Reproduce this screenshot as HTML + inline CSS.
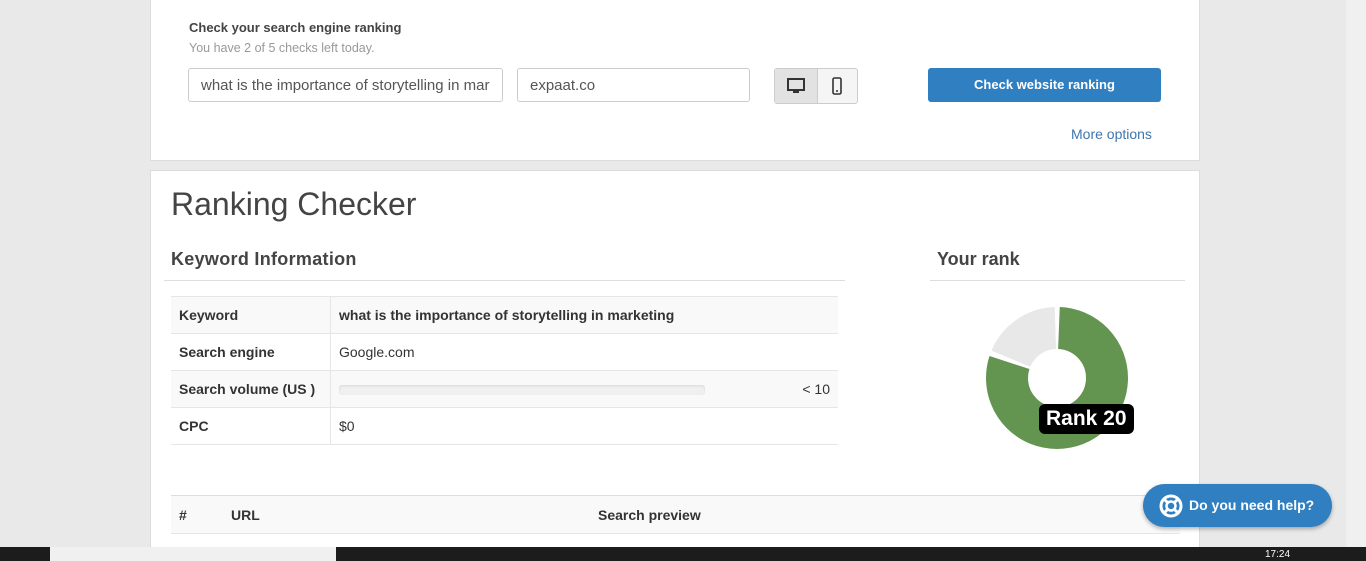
<!DOCTYPE html>
<html style="overflow:hidden"><head><style>
html,body{margin:0;width:1366px;height:561px;overflow:hidden}
body{background:#e9e9e9;font-family:"Liberation Sans",sans-serif;position:relative}
.p{position:absolute;background:#fff;border:1px solid #dcdcdc}
.a{position:absolute;white-space:nowrap}
.in{position:absolute;border:1px solid #ccc;border-radius:3px;background:#fff;font-size:15px;color:#555;box-sizing:border-box;padding:8px 12px}
table{border-collapse:collapse;font-size:14px;color:#333}
td{height:36px;border-bottom:1px solid #e6e6e6;padding:0 8px}
</style></head><body>
<div class="p" style="left:150px;top:-1px;width:1048px;height:160px"></div>
<div class="a" style="left:189px;top:20px;font-size:13px;font-weight:bold;color:#444">Check your search engine ranking</div>
<div class="a" style="left:189px;top:41px;font-size:12.5px;color:#999">You have 2 of 5 checks left today.</div>
<div class="in" style="left:188px;top:68px;width:315px;height:34px;overflow:hidden">what is the importance of storytelling in mar</div>
<div class="in" style="left:517px;top:68px;width:233px;height:34px">expaat.co</div>
<div style="position:absolute;left:774px;top:68px;width:84px;height:36px;border:1px solid #ccc;border-radius:3px;box-sizing:border-box;background:#f5f5f5">
<div style="position:absolute;left:0;top:0;width:42px;height:34px;background:#e2e2e2;border-right:1px solid #ccc"></div>
<svg style="position:absolute;left:12px;top:9px" width="18" height="16"><rect x="1" y="1" width="16" height="11" fill="none" stroke="#333" stroke-width="2"/><rect x="6" y="13" width="6" height="2" fill="#333"/></svg>
<svg style="position:absolute;left:57px;top:8px" width="10" height="18"><rect x="1" y="1" width="8" height="16" rx="1.5" fill="none" stroke="#333" stroke-width="1.6"/><circle cx="5" cy="14" r="1" fill="#333"/></svg>
</div>
<div class="a" style="left:928px;top:68px;width:233px;height:34px;background:#2f7fc1;border-radius:3px;color:#fff;font-size:13px;font-weight:bold;text-align:center;line-height:34px">Check website ranking</div>
<div class="a" style="left:1071px;top:126px;font-size:14px;color:#3f76ae">More options</div>

<div class="p" style="left:150px;top:170px;width:1048px;height:380px"></div>
<div class="a" style="left:171px;top:186px;font-size:32px;color:#444">Ranking Checker</div>
<div class="a" style="left:171px;top:249px;font-size:18px;font-weight:bold;color:#444;letter-spacing:0.3px">Keyword Information</div>
<div class="a" style="left:164px;top:280px;width:681px;height:1px;background:#ddd"></div>
<div class="a" style="left:937px;top:249px;font-size:18px;font-weight:bold;color:#444">Your rank</div>
<div class="a" style="left:930px;top:280px;width:255px;height:1px;background:#ddd"></div>
<table style="position:absolute;left:171px;top:296px;width:667px;border-top:1px solid #e6e6e6">
<tr style="background:#f9f9f9"><td style="width:143px;border-right:1px solid #e6e6e6;font-weight:bold">Keyword</td><td style="font-weight:bold">what is the importance of storytelling in marketing</td></tr>
<tr><td style="border-right:1px solid #e6e6e6;font-weight:bold">Search engine</td><td>Google.com</td></tr>
<tr style="background:#f9f9f9"><td style="border-right:1px solid #e6e6e6;font-weight:bold">Search volume (US )</td><td><div style="display:inline-block;width:366px;height:10px;background:#f0f0f0;border-radius:3px;box-shadow:inset 0 1px 2px rgba(0,0,0,.1);vertical-align:middle"></div><span style="float:right">&lt; 10</span></td></tr>
<tr><td style="border-right:1px solid #e6e6e6;font-weight:bold">CPC</td><td>$0</td></tr>
</table>
<svg style="position:absolute;left:986px;top:307px" width="142" height="142" viewBox="0 0 142 142">
<g transform="rotate(-90 71 71)">
<circle cx="71" cy="71" r="50" fill="none" stroke="#639550" stroke-width="42" stroke-dasharray="249 400" stroke-dashoffset="-2"/>
<circle cx="71" cy="71" r="50" fill="none" stroke="#e8e8e8" stroke-width="42" stroke-dasharray="57 400" stroke-dashoffset="-255"/>
</g></svg>
<div class="a" style="left:1039px;top:404px;background:#000;color:#fff;font-weight:bold;font-size:21px;padding:3px 7px;border-radius:6px">Rank 20</div>

<div class="a" style="left:171px;top:495px;width:1009px;height:37px;background:#f9f9f9;border-top:1px solid #ddd;border-bottom:1px solid #e6e6e6;font-size:14px;font-weight:bold;color:#333">
<span class="a" style="left:8px;top:11px">#</span><span class="a" style="left:60px;top:11px">URL</span><span class="a" style="left:427px;top:11px">Search preview</span></div>
<div class="a" style="left:1346px;top:0;width:20px;height:547px;background:#f0f0f0"></div>
<div class="a" style="left:1143px;top:484px;width:189px;height:43px;background:#2f7fc1;border-radius:22px;color:#fff;font-weight:bold;font-size:14px;line-height:43px;box-shadow:0 2px 4px rgba(0,0,0,.3)">
<svg style="position:absolute;left:16px;top:10px" width="24" height="24"><circle cx="12" cy="12" r="10" fill="none" stroke="#fff" stroke-width="3"/><circle cx="12" cy="12" r="4.5" fill="none" stroke="#fff" stroke-width="2.5"/><path d="M5 5l4 4M19 5l-4 4M5 19l4-4M19 19l-4-4" stroke="#fff" stroke-width="3"/></svg>
<span style="position:absolute;left:46px">Do you need help?</span></div>
<div class="a" style="left:0;top:547px;width:1366px;height:14px;background:#1c1c1c"></div>
<div class="a" style="left:50px;top:547px;width:286px;height:14px;background:#f0f0f0"></div>
<div class="a" style="left:1265px;top:549px;font-size:10px;color:#fff">17:24</div>
</body></html>
